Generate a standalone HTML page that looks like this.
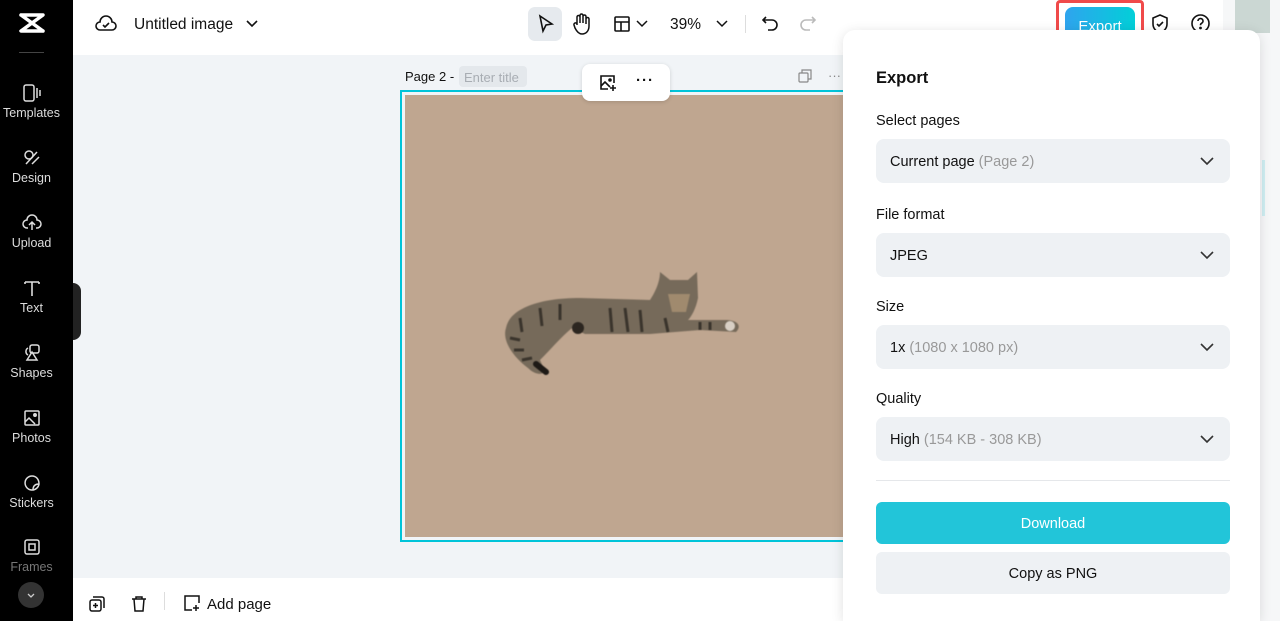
<!DOCTYPE html>
<html><head><meta charset="utf-8"><style>
*{box-sizing:border-box;margin:0;padding:0}
html,body{width:1280px;height:621px;overflow:hidden}
body{position:relative;font-family:"Liberation Sans",sans-serif;background:#f1f4f7;color:#111}
.abs{position:absolute}
.side{left:0;top:0;width:73px;height:621px;background:#000}
.si{position:absolute;left:0;width:63px;text-align:center;color:#ddd;font-size:12.5px}
.si svg{display:block;margin:0 auto 3px}
.top{left:73px;top:0;width:1207px;height:55px;background:#fff}
.bot{left:73px;top:578px;width:1207px;height:43px;background:#fff}
.panel{left:843px;top:30px;width:417px;height:591px;background:#fff;border-radius:12px 12px 0 0;box-shadow:0 2px 12px rgba(0,0,0,.12)}
.lbl{position:absolute;left:33px;font-size:14.5px;color:#111}
.sel{position:absolute;left:33px;width:354px;height:44px;background:#eef1f4;border-radius:8px;font-size:14.5px;padding:15px 14px;color:#111}
.sel span{color:#999}
.sel svg{position:absolute;right:16px;top:17px}
</style></head><body>
<div class="abs side">
 <svg class="abs" style="left:18px;top:12px" width="28" height="22" viewBox="0 0 28 22"><path d="M3 3 H25 L3 19 H25 M3 3 L25 19" stroke="#fff" stroke-width="3.5" fill="none" stroke-linejoin="round" stroke-linecap="round"/></svg>
 <div class="abs" style="left:19px;top:52px;width:25px;height:1px;background:#444"></div>
 <div class="si" style="top:83px"><svg width="20" height="20" viewBox="0 0 20 20" fill="none" stroke="#ddd" stroke-width="1.5"><rect x="2" y="2" width="10" height="16" rx="2"/><path d="M15 5v10M18 7v6"/></svg>Templates</div>
 <div class="si" style="top:148px"><svg width="20" height="20" viewBox="0 0 20 20" fill="none" stroke="#ddd" stroke-width="1.5"><circle cx="7" cy="7" r="4"/><path d="M10 16 L17 9 M4 16 L15 4"/></svg>Design</div>
 <div class="si" style="top:213px"><svg width="20" height="20" viewBox="0 0 20 20" fill="none" stroke="#ddd" stroke-width="1.5"><path d="M6 15H5a4 4 0 0 1 0-8 5 5 0 0 1 10 0 4 4 0 0 1 0 8h-1M10 9v8M7 12l3-3 3 3"/></svg>Upload</div>
 <div class="si" style="top:278px"><svg width="20" height="20" viewBox="0 0 20 20" fill="none" stroke="#ddd" stroke-width="1.6"><path d="M3 4h14M10 4v14M3 4v2M17 4v2"/></svg>Text</div>
 <div class="si" style="top:343px"><svg width="20" height="20" viewBox="0 0 20 20" fill="none" stroke="#ddd" stroke-width="1.5"><rect x="8" y="2" width="9" height="8" rx="2"/><path d="M6 5a4 4 0 0 0 0 7M10 9l-5 8h10z"/></svg>Shapes</div>
 <div class="si" style="top:408px"><svg width="20" height="20" viewBox="0 0 20 20" fill="none" stroke="#ddd" stroke-width="1.5"><rect x="3" y="3" width="14" height="14" rx="1"/><path d="M3 14l4-4 6 6"/><circle cx="13" cy="7" r="1.2" fill="#ddd"/></svg>Photos</div>
 <div class="si" style="top:473px"><svg width="20" height="20" viewBox="0 0 20 20" fill="none" stroke="#ddd" stroke-width="1.5"><path d="M17 11a7 7 0 1 1-7-8c4 0 7 3 7 8zM17 11c-4 0-6 2-6 6"/></svg>Stickers</div>
 <div class="si" style="top:537px;color:#777"><svg width="20" height="20" viewBox="0 0 20 20" fill="none" stroke="#ddd" stroke-width="1.5"><rect x="3" y="3" width="14" height="14" rx="2"/><rect x="7" y="7" width="6" height="6"/></svg>Frames</div>
 <div class="abs" style="left:18px;top:582px;width:26px;height:26px;border-radius:50%;background:#333"><svg width="26" height="26" viewBox="0 0 26 26"><path d="M10 12l3 3 3-3" stroke="#ccc" stroke-width="1.3" fill="none"/></svg></div>
</div>
<div class="abs" style="left:73px;top:283px;width:8px;height:57px;background:#222;border-radius:0 8px 8px 0"></div>
<div class="abs top">
 <svg class="abs" style="left:22px;top:14px" width="22" height="20" viewBox="0 0 22 20" fill="none" stroke="#111" stroke-width="1.6"><path d="M6 16H5a4 4 0 0 1 0-8 6 6 0 0 1 12 0 4 4 0 0 1 0 8z"/><path d="M8 11l2 2 4-4"/></svg>
 <div class="abs" style="left:61px;top:16px;font-size:15.5px;color:#111">Untitled image</div>
 <svg class="abs" style="left:173px;top:19px" width="12" height="10"><path d="M1 2l5 5 5-5" stroke="#111" stroke-width="1.6" fill="none"/></svg>
 <div class="abs" style="left:455px;top:7px;width:34px;height:34px;background:#e6eaee;border-radius:7px"></div>
 <svg class="abs" style="left:463px;top:14px" width="20" height="20" viewBox="0 0 20 20" fill="none" stroke="#111" stroke-width="1.6"><path d="M4 2l12 8-6 1-3 6z"/></svg>
 <svg class="abs" style="left:499px;top:13px" width="20" height="22" viewBox="0 0 20 22" fill="none" stroke="#111" stroke-width="1.5"><path d="M5 12V4a1.5 1.5 0 0 1 3 0v6V2.5a1.5 1.5 0 0 1 3 0V10V3.5a1.5 1.5 0 0 1 3 0V11V6a1.5 1.5 0 0 1 3 0v7c0 5-3 8-7 8-3 0-5-2-7-6l-1-3a1.5 1.5 0 0 1 3-1z"/></svg>
 <svg class="abs" style="left:540px;top:15px" width="18" height="18" viewBox="0 0 18 18" fill="none" stroke="#111" stroke-width="1.6"><rect x="2" y="2" width="14" height="14" rx="1"/><path d="M2 7h14M8 7v9"/></svg>
 <svg class="abs" style="left:563px;top:19px" width="12" height="9"><path d="M1 2l5 5 5-5" stroke="#111" stroke-width="1.5" fill="none"/></svg>
 <div class="abs" style="left:597px;top:16px;font-size:15.5px">39%</div>
 <svg class="abs" style="left:643px;top:19px" width="12" height="9"><path d="M1 2l5 5 5-5" stroke="#111" stroke-width="1.5" fill="none"/></svg>
 <div class="abs" style="left:672px;top:15px;width:1px;height:18px;background:#ddd"></div>
 <svg class="abs" style="left:688px;top:14px" width="18" height="18" viewBox="0 0 18 18" fill="none" stroke="#111" stroke-width="1.6"><path d="M5 3L2 6l3 3M2 6h9a5 5 0 0 1 0 10H7"/></svg>
 <svg class="abs" style="left:726px;top:14px" width="18" height="18" viewBox="0 0 18 18" fill="none" stroke="#bbb" stroke-width="1.6"><path d="M13 3l3 3-3 3M16 6H7a5 5 0 0 0 0 10h4"/></svg>
 <div class="abs" style="left:992px;top:7px;width:70px;height:36px;border-radius:8px;background:linear-gradient(90deg,#2fa4ee,#02cfd8);color:#fff;font-size:15px;text-align:center;padding-top:11px">Export</div>
 <div class="abs" style="left:983px;top:0;width:88px;height:45px;border:3px solid #f04a4a;border-radius:4px"></div>
 <svg class="abs" style="left:1077px;top:13px" width="20" height="22" viewBox="0 0 20 22" fill="none" stroke="#111" stroke-width="1.6"><path d="M10 2l7 3v6c0 5-4 8-7 9-3-1-7-4-7-9V5z"/><path d="M7 11l2 2 4-4"/></svg>
 <svg class="abs" style="left:1117px;top:13px" width="21" height="21" viewBox="0 0 21 21" fill="none" stroke="#111" stroke-width="1.6"><circle cx="10.5" cy="10.5" r="8.5"/><path d="M8 8a2.5 2.5 0 1 1 3.5 2.3c-.8.4-1 1-1 2"/><circle cx="10.5" cy="15" r=".6" fill="#111"/></svg>
 <div class="abs" style="left:1150px;top:0;width:57px;height:55px;background:#f6f7f8"></div>
 <div class="abs" style="left:1162px;top:0;width:35px;height:33px;background:#cbd7d3"></div>
</div>
<div class="abs" style="left:405px;top:69px;font-size:13px;color:#111">Page 2 -</div>
<div class="abs" style="left:459px;top:66px;width:68px;height:21px;background:#e4e8ec;border-radius:4px;font-size:13px;color:#a8adb3;padding:4px 5px">Enter title</div>
<svg class="abs" style="left:798px;top:69px" width="14" height="14" viewBox="0 0 14 14" fill="none" stroke="#888" stroke-width="1.2"><rect x="1" y="4" width="9" height="9" rx="1"/><path d="M4 4V1h9v9h-3"/></svg>
<div class="abs" style="left:828px;top:68px;font-size:13px;color:#888">···</div>
<div class="abs" style="left:400px;top:90px;width:450px;height:452px;border:2px solid #00c4d9"></div>
<div class="abs" style="left:405px;top:95px;width:440px;height:442px;background:#bfa690"></div>
<svg class="abs" style="left:500px;top:268px;filter:blur(0.6px)" width="242" height="110" viewBox="0 0 242 110">
 <path d="M6 60 C10 40 40 30 80 30 L150 32 C158 20 160 10 160 4 L170 12 L188 12 L197 4 L198 30 C196 40 192 48 188 52 L225 52 C238 52 242 58 236 64 L200 62 L150 66 L85 66 L72 60 C60 70 52 80 40 92 L45 103 C42 108 34 106 28 100 C12 88 2 72 6 60Z" fill="#766a5a"/>
 <path d="M20 50 L22 64 M40 40 L42 58 M60 36 L60 52 M110 40 L112 64 M125 40 L128 64 M140 42 L142 64 M165 50 L168 64 M200 54 L200 62 M210 54 L210 62 M10 70 L20 72 M14 82 L24 82 M22 92 L32 90" stroke="#3a342c" stroke-width="3" fill="none"/>
 <circle cx="78" cy="60" r="6" fill="#2c2620"/><circle cx="230" cy="58" r="5" fill="#d8cfc4"/>
 <path d="M168 26 L190 26 L186 44 L172 44Z" fill="#a08a6e"/>
 <path d="M36 96 L46 104" stroke="#1e1a16" stroke-width="6" stroke-linecap="round"/>
</svg>
<div class="abs" style="left:582px;top:64px;width:88px;height:37px;background:#fff;border-radius:8px;box-shadow:0 1px 4px rgba(0,0,0,.15)">
 <svg class="abs" style="left:16px;top:9px" width="20" height="20" viewBox="0 0 20 20" fill="none" stroke="#111" stroke-width="1.6"><path d="M10 16H3V3h13v7"/><path d="M3 13l4-4 5 5"/><circle cx="12" cy="7" r="1" fill="#111"/><path d="M15 12v6M12 15h6"/></svg>
 <div class="abs" style="left:54px;top:8px;font-size:15px;font-weight:bold;letter-spacing:1px">···</div>
</div>
<div class="abs bot">
 <svg class="abs" style="left:15px;top:17px" width="18" height="18" viewBox="0 0 18 18" fill="none" stroke="#111" stroke-width="1.5"><rect x="2" y="5" width="11" height="11" rx="2"/><path d="M5 2h9a2 2 0 0 1 2 2v9M7.5 8v5M5 10.5h5"/></svg>
 <svg class="abs" style="left:57px;top:17px" width="18" height="18" viewBox="0 0 18 18" fill="none" stroke="#111" stroke-width="1.5"><path d="M2 4h14M6 4V2h6v2M4 4l1 12h8l1-12"/></svg>
 <div class="abs" style="left:91px;top:14px;width:1px;height:18px;background:#ddd"></div>
 <svg class="abs" style="left:110px;top:16px" width="18" height="18" viewBox="0 0 18 18" fill="none" stroke="#111" stroke-width="1.5"><path d="M9 16H2V2h14v7M13 11v6M10 14h6"/></svg>
 <div class="abs" style="left:134px;top:18px;font-size:15px">Add page</div>
</div>
<div class="abs" style="left:1260px;top:55px;width:20px;height:566px;background:#f6f7f8"></div>
<div class="abs" style="left:1262px;top:160px;width:3px;height:56px;background:#cfeff3"></div>
<div class="abs panel">
 <div class="abs" style="left:33px;top:39px;font-size:16.5px;font-weight:bold">Export</div>
 <div class="lbl" style="top:83px">Select pages</div>
 <div class="sel" style="top:109px">Current page <span>(Page 2)</span><svg width="14" height="10"><path d="M1 2l6 6 6-6" stroke="#333" stroke-width="1.6" fill="none"/></svg></div>
 <div class="lbl" style="top:177px">File format</div>
 <div class="sel" style="top:203px">JPEG<svg width="14" height="10"><path d="M1 2l6 6 6-6" stroke="#333" stroke-width="1.6" fill="none"/></svg></div>
 <div class="lbl" style="top:269px">Size</div>
 <div class="sel" style="top:295px">1x <span>(1080 x 1080 px)</span><svg width="14" height="10"><path d="M1 2l6 6 6-6" stroke="#333" stroke-width="1.6" fill="none"/></svg></div>
 <div class="lbl" style="top:361px">Quality</div>
 <div class="sel" style="top:387px">High <span>(154 KB - 308 KB)</span><svg width="14" height="10"><path d="M1 2l6 6 6-6" stroke="#333" stroke-width="1.6" fill="none"/></svg></div>
 <div class="abs" style="left:33px;top:450px;width:354px;height:1px;background:#e5e7ea"></div>
 <div class="abs" style="left:33px;top:472px;width:354px;height:42px;background:#22c5d9;border-radius:6px;color:#fff;font-size:14.5px;text-align:center;padding-top:14px">Download</div>
 <div class="abs" style="left:33px;top:522px;width:354px;height:42px;background:#eef1f4;border-radius:6px;color:#111;font-size:14.5px;text-align:center;padding-top:14px">Copy as PNG</div>
</div>
</body></html>
